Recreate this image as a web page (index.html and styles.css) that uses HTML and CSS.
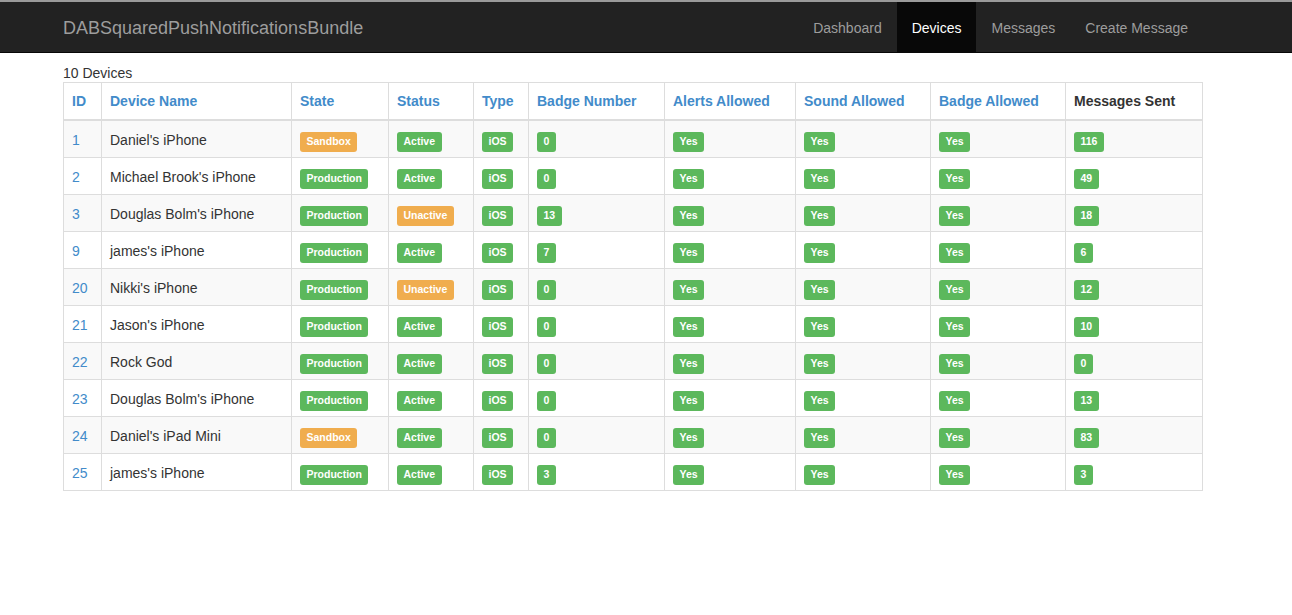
FILE: index.html
```html
<!DOCTYPE html>
<html>
<head>
<meta charset="utf-8">
<title>Devices</title>
<link rel="stylesheet" href="styles.css">
</head>
<body>
<nav class="navbar">
  <div class="container nav-inner">
    <a class="brand" href="#">DABSquaredPushNotificationsBundle</a>
    <ul class="nav">
      <li><a href="#">Dashboard</a></li>
      <li class="active"><a href="#">Devices</a></li>
      <li><a href="#">Messages</a></li>
      <li><a href="#">Create Message</a></li>
    </ul>
  </div>
</nav>
<div class="container">
  <div class="count">10 Devices</div>
  <table class="table">
    <thead>
      <tr>
        <th class="c-id"><a href="#">ID</a></th>
        <th class="c-name"><a href="#">Device Name</a></th>
        <th class="c-state"><a href="#">State</a></th>
        <th class="c-status"><a href="#">Status</a></th>
        <th class="c-type"><a href="#">Type</a></th>
        <th class="c-badge"><a href="#">Badge Number</a></th>
        <th class="c-alerts"><a href="#">Alerts Allowed</a></th>
        <th class="c-sound"><a href="#">Sound Allowed</a></th>
        <th class="c-badgeal"><a href="#">Badge Allowed</a></th>
        <th class="c-sent">Messages Sent</th>
      </tr>
    </thead>
    <tbody>
      <tr><td><a href="#">1</a></td><td>Daniel's iPhone</td><td><span class="label warn">Sandbox</span></td><td><span class="label ok">Active</span></td><td><span class="label ok">iOS</span></td><td><span class="label ok">0</span></td><td><span class="label ok">Yes</span></td><td><span class="label ok">Yes</span></td><td><span class="label ok">Yes</span></td><td><span class="label ok">116</span></td></tr>
      <tr><td><a href="#">2</a></td><td>Michael Brook's iPhone</td><td><span class="label ok">Production</span></td><td><span class="label ok">Active</span></td><td><span class="label ok">iOS</span></td><td><span class="label ok">0</span></td><td><span class="label ok">Yes</span></td><td><span class="label ok">Yes</span></td><td><span class="label ok">Yes</span></td><td><span class="label ok">49</span></td></tr>
      <tr><td><a href="#">3</a></td><td>Douglas Bolm's iPhone</td><td><span class="label ok">Production</span></td><td><span class="label warn">Unactive</span></td><td><span class="label ok">iOS</span></td><td><span class="label ok">13</span></td><td><span class="label ok">Yes</span></td><td><span class="label ok">Yes</span></td><td><span class="label ok">Yes</span></td><td><span class="label ok">18</span></td></tr>
      <tr><td><a href="#">9</a></td><td>james's iPhone</td><td><span class="label ok">Production</span></td><td><span class="label ok">Active</span></td><td><span class="label ok">iOS</span></td><td><span class="label ok">7</span></td><td><span class="label ok">Yes</span></td><td><span class="label ok">Yes</span></td><td><span class="label ok">Yes</span></td><td><span class="label ok">6</span></td></tr>
      <tr><td><a href="#">20</a></td><td>Nikki's iPhone</td><td><span class="label ok">Production</span></td><td><span class="label warn">Unactive</span></td><td><span class="label ok">iOS</span></td><td><span class="label ok">0</span></td><td><span class="label ok">Yes</span></td><td><span class="label ok">Yes</span></td><td><span class="label ok">Yes</span></td><td><span class="label ok">12</span></td></tr>
      <tr><td><a href="#">21</a></td><td>Jason's iPhone</td><td><span class="label ok">Production</span></td><td><span class="label ok">Active</span></td><td><span class="label ok">iOS</span></td><td><span class="label ok">0</span></td><td><span class="label ok">Yes</span></td><td><span class="label ok">Yes</span></td><td><span class="label ok">Yes</span></td><td><span class="label ok">10</span></td></tr>
      <tr><td><a href="#">22</a></td><td>Rock God</td><td><span class="label ok">Production</span></td><td><span class="label ok">Active</span></td><td><span class="label ok">iOS</span></td><td><span class="label ok">0</span></td><td><span class="label ok">Yes</span></td><td><span class="label ok">Yes</span></td><td><span class="label ok">Yes</span></td><td><span class="label ok">0</span></td></tr>
      <tr><td><a href="#">23</a></td><td>Douglas Bolm's iPhone</td><td><span class="label ok">Production</span></td><td><span class="label ok">Active</span></td><td><span class="label ok">iOS</span></td><td><span class="label ok">0</span></td><td><span class="label ok">Yes</span></td><td><span class="label ok">Yes</span></td><td><span class="label ok">Yes</span></td><td><span class="label ok">13</span></td></tr>
      <tr><td><a href="#">24</a></td><td>Daniel's iPad Mini</td><td><span class="label warn">Sandbox</span></td><td><span class="label ok">Active</span></td><td><span class="label ok">iOS</span></td><td><span class="label ok">0</span></td><td><span class="label ok">Yes</span></td><td><span class="label ok">Yes</span></td><td><span class="label ok">Yes</span></td><td><span class="label ok">83</span></td></tr>
      <tr><td><a href="#">25</a></td><td>james's iPhone</td><td><span class="label ok">Production</span></td><td><span class="label ok">Active</span></td><td><span class="label ok">iOS</span></td><td><span class="label ok">3</span></td><td><span class="label ok">Yes</span></td><td><span class="label ok">Yes</span></td><td><span class="label ok">Yes</span></td><td><span class="label ok">3</span></td></tr>
    </tbody>
  </table>
</div>
</body>
</html>
```

FILE: styles.css
```css
* { box-sizing: border-box; }
html, body { margin: 0; padding: 0; }
body {
  font-family: "Liberation Sans", Arial, Helvetica, sans-serif;
  font-size: 14px;
  line-height: 20px;
  color: #333;
  background: #fff;
}
a { color: #428bca; text-decoration: none; }

.navbar {
  background: #222;
  border-top: 2px solid #9a9a9a;
  border-bottom: 1px solid #080808;
  height: 53px;
  margin-bottom: 9px;
}
.container {
  width: 1139px;
  margin-left: 63px;
}
.nav-inner {
  display: flex;
  justify-content: space-between;
  align-items: stretch;
  height: 50px;
}
.brand {
  color: #9d9d9d;
  font-size: 18px;
  line-height: 20px;
  padding: 16px 0 14px;
  height: 50px;
}
.nav {
  list-style: none;
  margin: 0 -1px 0 0;
  padding: 0;
  display: flex;
}
.nav li a {
  display: block;
  padding: 16px 15px 14px;
  line-height: 20px;
  color: #9d9d9d;
  font-size: 14px;
  height: 50px;
}
.nav li.active a {
  color: #fff;
  background: #080808;
}

.count {
  height: 20px;
  padding-top: 1px;
  line-height: 20px;
}

.table {
  width: 1139px;
  border-collapse: collapse;
  table-layout: fixed;
  border: 1px solid #ddd;
}
.table th, .table td {
  padding: 9px 8px 7px;
  border: 1px solid #ddd;
  text-align: left;
  vertical-align: top;
  line-height: 20px;
  white-space: nowrap;
}
.table th {
  padding: 8px;
  font-weight: bold;
  border-bottom: 2px solid #ddd;
}
.table tbody tr:nth-child(odd) td { background: #f9f9f9; }

.c-id { width: 38px; }
.c-name { width: 190px; }
.c-state { width: 97px; }
.c-status { width: 85px; }
.c-type { width: 55px; }
.c-badge { width: 136px; }
.c-alerts { width: 131px; }
.c-sound { width: 135px; }
.c-badgeal { width: 135px; }
.c-sent { width: 137px; }

.label {
  display: inline;
  padding: 3px 6.5px 5px;
  font-size: 10.5px;
  font-weight: bold;
  line-height: 1;
  color: #fff;
  white-space: nowrap;
  vertical-align: baseline;
  border-radius: 3px;
}
.label.ok { background: #5cb85c; }
.label.warn { background: #f0ad4e; }
```
